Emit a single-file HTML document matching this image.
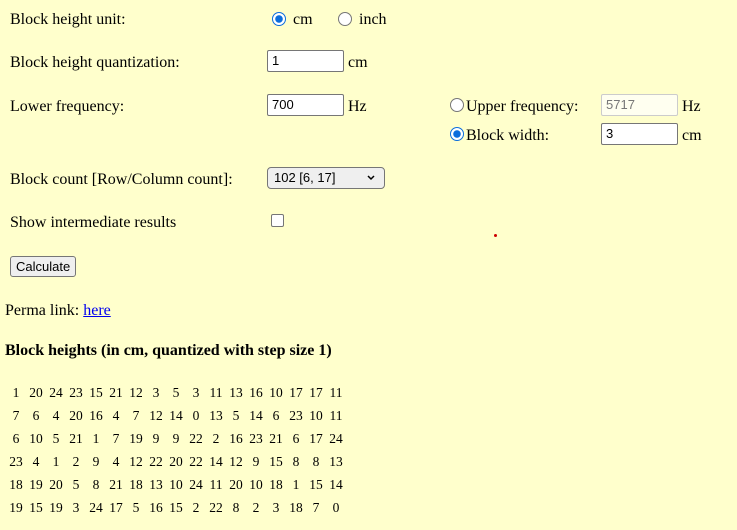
<!DOCTYPE html>
<html><head><meta charset="utf-8"><style>
body{margin:0;background:#ffffcc;font-family:"Liberation Serif",serif;font-size:16px;color:#000;width:737px;height:530px;position:relative;overflow:hidden}
.a{position:absolute;white-space:nowrap}
.in{position:absolute;box-sizing:border-box;height:22px;border:1px solid #767676;border-radius:2px;background:#fff;font-family:"Liberation Sans",sans-serif;font-size:13px;padding:3px 4px;line-height:14px}
.r{position:absolute;box-sizing:border-box;width:14px;height:14px;border-radius:50%;border:1px solid #767676;background:#fff}
.r.on{border:1.5px solid #0b6ddc;background:radial-gradient(circle,#0b6ddc 0 3.5px,#fff 4px)}
table{position:absolute;left:6px;top:381px;border-collapse:separate;border-spacing:0;font-size:13.5px}
td{width:20px;height:23px;text-align:center;padding:0}
</style></head><body>
<div class="a" style="left:10px;top:11px">Block height unit:</div>
<div class="r on" style="left:272px;top:12px"></div><div class="a" style="left:293px;top:11px">cm</div>
<div class="r" style="left:338px;top:12px"></div><div class="a" style="left:359px;top:11px">inch</div>
<div class="a" style="left:10px;top:54px">Block height quantization:</div>
<div class="in" style="left:267px;top:50px;width:77px">1</div><div class="a" style="left:348px;top:54px">cm</div>
<div class="a" style="left:10px;top:98px">Lower frequency:</div>
<div class="in" style="left:267px;top:94px;width:77px">700</div><div class="a" style="left:348px;top:98px">Hz</div>
<div class="r" style="left:450px;top:98px"></div><div class="a" style="left:466px;top:98px">Upper frequency:</div>
<div class="in" style="left:601px;top:94px;width:77px;color:#777;background:#fffff0;border-color:#ccc">5717</div><div class="a" style="left:682px;top:98px">Hz</div>
<div class="r on" style="left:450px;top:127px"></div><div class="a" style="left:466px;top:127px">Block width:</div>
<div class="in" style="left:601px;top:123px;width:77px">3</div><div class="a" style="left:682px;top:127px">cm</div>
<div class="a" style="left:10px;top:171px">Block count [Row/Column count]:</div>
<div class="in" style="left:267px;top:167px;width:118px;background:#efefef;border-radius:4px;padding-left:6px">102 [6, 17]<svg style="position:absolute;right:9px;top:7px" width="8" height="6"><path d="M1 1L4 4L7 1" fill="none" stroke="#000" stroke-width="1.5"/></svg></div>
<div class="a" style="left:10px;top:214px">Show intermediate results</div>
<div style="position:absolute;left:271px;top:214px;width:13px;height:13px;box-sizing:border-box;border:1px solid #767676;border-radius:2px;background:#fff"></div>
<div style="position:absolute;left:494px;top:234px;width:3px;height:3px;border-radius:50%;background:#c00"></div>
<div class="a" style="left:10px;top:256px;height:21px;box-sizing:border-box;border:1px solid #767676;border-radius:3px;background:#efefef;font-family:'Liberation Sans',sans-serif;font-size:13px;padding:2px 5px;line-height:15px">Calculate</div>
<div class="a" style="left:5px;top:302px">Perma link: <span style="color:#00e;text-decoration:underline">here</span></div>
<div class="a" style="left:5px;top:342px;font-weight:bold;font-size:16px">Block heights (in cm, quantized with step size 1)</div>
<table>
<tr><td>1</td><td>20</td><td>24</td><td>23</td><td>15</td><td>21</td><td>12</td><td>3</td><td>5</td><td>3</td><td>11</td><td>13</td><td>16</td><td>10</td><td>17</td><td>17</td><td>11</td></tr>
<tr><td>7</td><td>6</td><td>4</td><td>20</td><td>16</td><td>4</td><td>7</td><td>12</td><td>14</td><td>0</td><td>13</td><td>5</td><td>14</td><td>6</td><td>23</td><td>10</td><td>11</td></tr>
<tr><td>6</td><td>10</td><td>5</td><td>21</td><td>1</td><td>7</td><td>19</td><td>9</td><td>9</td><td>22</td><td>2</td><td>16</td><td>23</td><td>21</td><td>6</td><td>17</td><td>24</td></tr>
<tr><td>23</td><td>4</td><td>1</td><td>2</td><td>9</td><td>4</td><td>12</td><td>22</td><td>20</td><td>22</td><td>14</td><td>12</td><td>9</td><td>15</td><td>8</td><td>8</td><td>13</td></tr>
<tr><td>18</td><td>19</td><td>20</td><td>5</td><td>8</td><td>21</td><td>18</td><td>13</td><td>10</td><td>24</td><td>11</td><td>20</td><td>10</td><td>18</td><td>1</td><td>15</td><td>14</td></tr>
<tr><td>19</td><td>15</td><td>19</td><td>3</td><td>24</td><td>17</td><td>5</td><td>16</td><td>15</td><td>2</td><td>22</td><td>8</td><td>2</td><td>3</td><td>18</td><td>7</td><td>0</td></tr>
</table>
</body></html>
